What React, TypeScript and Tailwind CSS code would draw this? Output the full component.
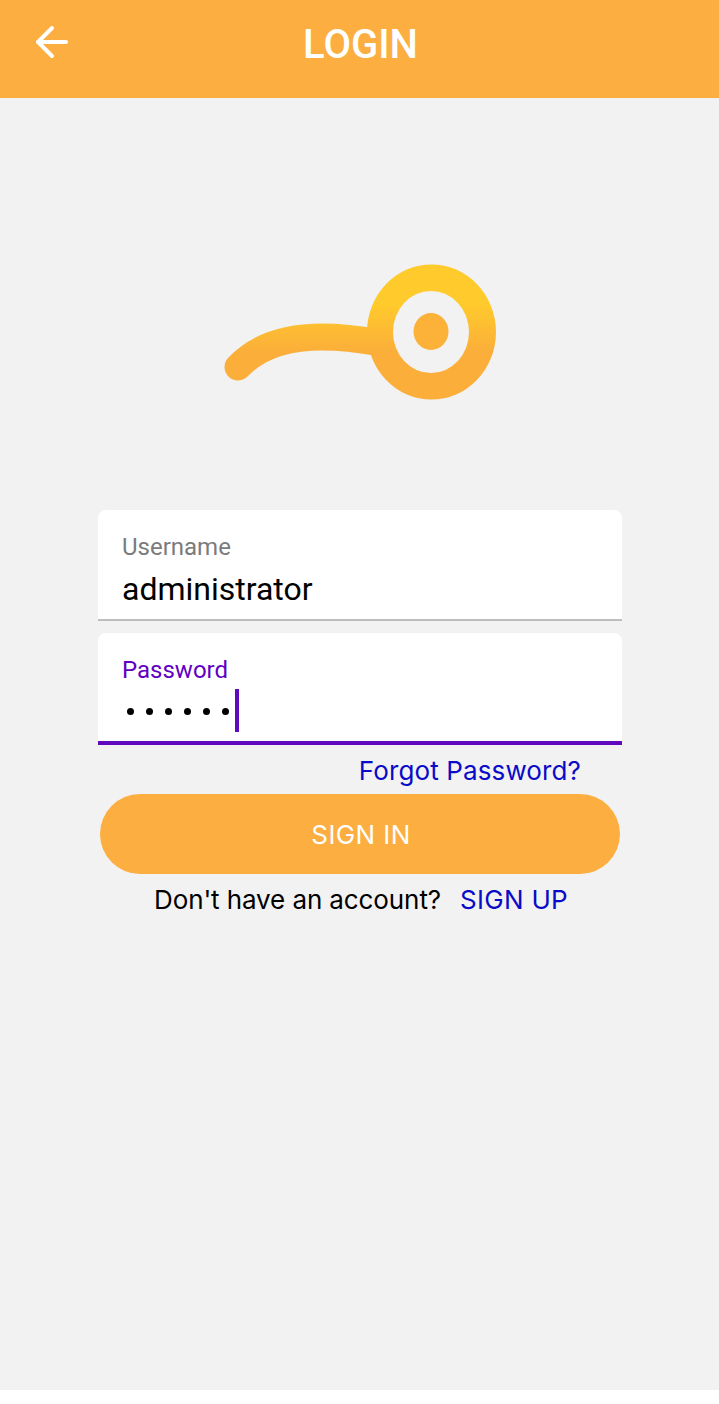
import { ArrowLeft } from "lucide-react";

function Logo() {
  return (
    <svg width="290" height="150" viewBox="215 257 290 150" className="block">
      <defs>
        <linearGradient id="logoFill" gradientUnits="userSpaceOnUse" x1="0" y1="305" x2="0" y2="352">
          <stop offset="0" stopColor="#ffca2c" />
          <stop offset="1" stopColor="#fbae3a" />
        </linearGradient>
      </defs>
      <path
        d="M238 367C258 346 288 337 322 337C342 337 358 339 378 342.500"
        fill="none"
        stroke="url(#logoFill)"
        strokeWidth="27"
        strokeLinecap="round"
      />
      <path
        fillRule="evenodd"
        fill="url(#logoFill)"
        d="M367 332a64 67 0 1 0 129 0a64 67 0 1 0 -129 0ZM393 332a38 41 0 1 1 76 0a38 41 0 1 1 -76 0Z"
      />
      <ellipse cx="431" cy="331.500" rx="17.500" ry="18.500" fill="#fcb138" />
    </svg>
  );
}

export default function App() {
  return (
    <div className="h-[1404px] bg-white font-['Roboto',sans-serif]">
      <div className="flex h-[1390px] flex-col bg-[#f2f2f2]">
        <header className="relative flex h-[98px] shrink-0 items-center justify-center bg-[#fcae41] pb-[8px] pl-[2px]">
          <ArrowLeft className="absolute left-[28px] top-[18px] text-white" size={48} strokeWidth={2} />
          <h1 className="text-[40px] font-medium leading-none text-white">LOGIN</h1>
        </header>

        <div className="flex h-[412px] shrink-0 items-start justify-center pt-[159px]">
          <Logo />
        </div>

        <div className="ml-[98px] flex w-[524px] flex-col">
          <div className="h-[111px] rounded-t-[8px] border-b-2 border-[#bdbdbd] bg-white px-[24px] pt-[22px]">
            <div className="text-[24px] leading-[30px] text-[#7b7b7b]">Username</div>
            <div className="mt-[6px] text-[32px] leading-[42px] text-black">administrator</div>
          </div>
          <div className="mt-[12px] h-[112px] rounded-t-[8px] border-b-4 border-[#5f0bbd] bg-white px-[24px] pt-[22px]">
            <div className="text-[24px] leading-[30px] text-[#6200c4]">Password</div>
            <div className="relative mt-[4px] flex h-[44px] items-center gap-[12px] pl-[5px]">
              {[0, 1, 2, 3, 4, 5].map((i) => (
                <span key={i} className="h-[7px] w-[7px] rounded-full bg-black" />
              ))}
              <span className="absolute left-[113px] top-0 h-[43px] w-[4px] bg-[#5f0bbd]" />
            </div>
          </div>
          <div className="flex h-[49px] items-center justify-end pt-[2px] pr-[41px] font-['Inter',sans-serif] text-[26px] tracking-[0.125px] text-[#0a0ac8]">
            Forgot Password?
          </div>
          <button className="mx-[2px] h-[80px] rounded-full bg-[#fcae41] pl-[2px] font-['Inter',sans-serif] text-[26px] tracking-[0.4px] text-white">
            SIGN IN
          </button>
          <div className="mt-[7px] flex h-[36px] items-center justify-center pl-[2px] font-['Inter',sans-serif] text-[26px] text-black">
            <span className="tracking-[-0.1px]">Don't have an account?</span>
            <span className="ml-[19px] tracking-[0.3px] text-[#0a0ac8]">SIGN UP</span>
          </div>
        </div>
      </div>
    </div>
  );
}
